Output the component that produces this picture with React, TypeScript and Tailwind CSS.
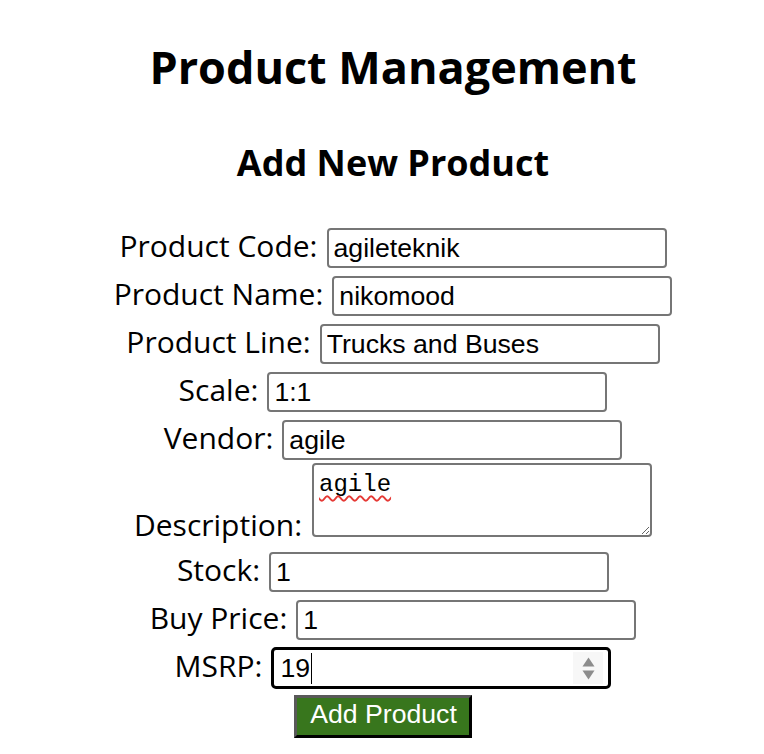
import React from "react";

const labelCls = "font-['Open_Sans',sans-serif] text-[30px] leading-none text-black";
const inputCls =
  "w-[340px] h-[40px] my-[4px] border-2 border-[#767676] rounded-[4px] px-[5px] text-[26.67px] font-['Liberation_Sans',Arial,sans-serif] text-black bg-white outline-none";

function Row({ label, value }: { label: string; value: string }) {
  return (
    <div className="flex justify-center items-baseline gap-[9px]">
      <label className={labelCls}>{label}</label>
      <input type="text" defaultValue={value} className={inputCls} />
    </div>
  );
}

export default function App() {
  return (
    <div className="min-h-screen bg-white pl-[22px] text-black">
      <div className="flex flex-col items-center">
        <h1 className="mt-[44px] font-['Open_Sans',sans-serif] font-bold text-[45px] leading-none">
          Product Management
        </h1>
        <h2 className="mt-[56px] font-['Open_Sans',sans-serif] font-bold text-[36px] leading-none">
          Add New Product
        </h2>
        <form className="mt-[43px] flex flex-col items-stretch w-full" onSubmit={(e) => e.preventDefault()}>
          <Row label="Product Code:" value="agileteknik" />
          <Row label="Product Name:" value="nikomood" />
          <Row label="Product Line:" value="Trucks and Buses" />
          <Row label="Scale:" value="1:1" />
          <Row label="Vendor:" value="agile" />
          <div className="flex justify-center items-end gap-[10px]">
            <label className={`${labelCls} mb-[8px]`}>Description:</label>
            <div className="relative flex mt-[-1px] mb-[11px]">
              <textarea
                defaultValue="agile"
                spellCheck={false}
                className="w-[340px] h-[74px] border-2 border-[#767676] rounded-[4px] pt-[6px] pl-[5px] font-['Liberation_Mono','DejaVu_Sans_Mono',monospace] text-[24px] leading-[28px] text-black bg-white outline-none"
              />
              <span className="pointer-events-none absolute left-[7px] top-[8px] font-['Liberation_Mono','DejaVu_Sans_Mono',monospace] text-[24px] leading-[28px] text-transparent underline decoration-wavy decoration-[#e53935] decoration-[1.5px] underline-offset-[4px] [text-decoration-skip-ink:none]">
                agile
              </span>
            </div>
          </div>
          <Row label="Stock:" value="1" />
          <Row label="Buy Price:" value="1" />
          <div className="flex justify-center items-baseline gap-[9px]">
            <label className={labelCls}>MSRP:</label>
            <div className="w-[340px] h-[42px] my-[3px] border-[3px] border-black rounded-[5px] bg-white flex items-center pl-[6px] pr-[4px] font-['Liberation_Sans',Arial,sans-serif] text-[26.67px] text-black">
              <span>19</span>
              <span className="w-[1px] h-[31px] bg-black ml-[1px]" />
              <span className="flex-1" />
              <span className="w-[30px] h-[32px] bg-[#f7f7f7] flex flex-col items-center justify-center gap-[3px] mr-[1px]">
                <svg width="13" height="10" viewBox="0 0 13 10">
                  <path d="M6.5 0.5 L12.5 9.5 L0.5 9.5 Z" fill="#8c8c8c" />
                </svg>
                <svg width="13" height="10" viewBox="0 0 13 10">
                  <path d="M0.5 0.5 L12.5 0.5 L6.5 9.5 Z" fill="#8c8c8c" />
                </svg>
              </span>
            </div>
          </div>
          <div className="flex justify-center mt-[3px]">
            <button
              type="submit"
              className="mr-[20px] h-[43px] pl-[13px] pr-[12px] pb-[5px] leading-[32px] bg-[#38761d] text-white text-[26.67px] font-['Liberation_Sans',Arial,sans-serif] border-[3px] border-t-[#595959] border-l-[#595959] border-b-black border-r-black"
            >
              Add Product
            </button>
          </div>
        </form>
      </div>
    </div>
  );
}
